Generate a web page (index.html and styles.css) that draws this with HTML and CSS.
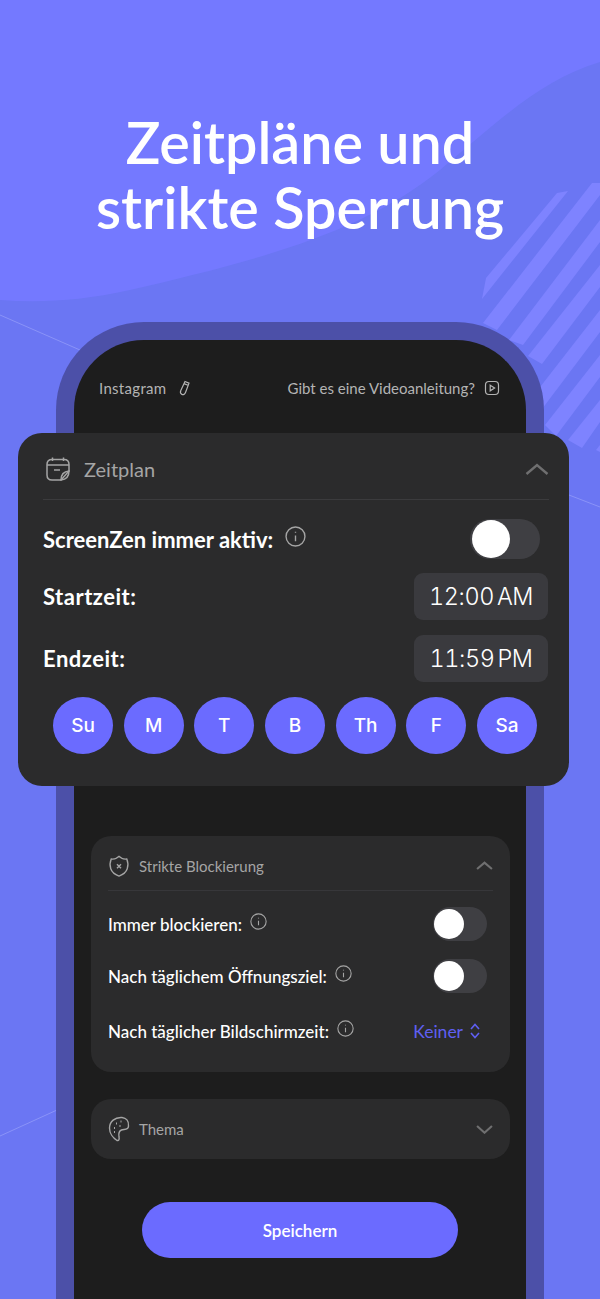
FILE: index.html
```html
<!DOCTYPE html>
<html lang="de">

<head>
    <meta charset="UTF-8">
    <meta name="viewport" content="width=device-width, initial-scale=1.0">
    <title>Zeitpläne und strikte Sperrung</title>
    <link rel="stylesheet" href="styles.css">
</head>

<body>
    <svg class="backdrop" viewBox="0 0 600 1299" aria-hidden="true">
        <rect width="600" height="1299" fill="#6b76f3" />
        <path class="blob" d="M0 0H600V62C540 80 500 120 440 170C360 235 250 262 130 290C80 301 40 303 0 300Z" />
        <g class="stripes">
            <path d="M557 193L568 191L482 299L486 278Z" />
            <path d="M483 323L592 183H600V195L497 330Z" />
            <path d="M509 340L600 220V242L523 345Z" />
            <path d="M528 356L600 265V287L542 364Z" />
            <path d="M530 400L600 310V332L530 425Z" />
            <path d="M545 425L600 355V377L556 436Z" />
            <path d="M568 440L600 400V422L582 448Z" />
            <path d="M600 445V452L596 450Z" />
        </g>
        <g class="hairlines">
            <path d="M0 315L80 350" />
            <path d="M569 495L600 507" />
            <path d="M0 1136L57 1110" />
        </g>
    </svg>

    <div class="page">
        <header class="hero">
            <h1>Zeitpläne und<br>strikte Sperrung</h1>
        </header>

        <div class="phone">
            <div class="screen">
                <div class="topbar">
                    <div class="topbar-item topbar-app">
                        <span>Instagram</span>
                        <svg class="icon-sm" viewBox="0 0 16 16">
                            <path d="M9 1.500L13 3.200L9.500 12.500C8.800 14.400 7.300 15 5.900 14.400C4.500 13.800 4 12.500 4.800 10.600Z" />
                            <path d="M8 3.600L12 5.300" />
                        </svg>
                    </div>
                    <div class="topbar-item">
                        <span>Gibt es eine Videoanleitung?</span>
                        <svg class="icon-sm" viewBox="0 0 16 16">
                            <rect x="1.500" y="1.500" width="13" height="13" rx="3.500" />
                            <path d="M6.200 5.200L10.600 8L6.200 10.800Z" />
                        </svg>
                    </div>
                </div>

                <section class="schedule">
                    <div class="schedule-head">
                        <svg class="icon-lg" viewBox="0 0 26 26">
                            <path d="M7.500 1.500V5M18.500 1.500V5" />
                            <path d="M24 15V8.500C24 5.500 22 3.500 19 3.500H7C4 3.500 2 5.500 2 8.500V19C2 22 4 24 7 24H16Z" />
                            <path d="M2 9H24" />
                            <path d="M9 14H15" />
                            <path d="M16 24C16 19 19 15.500 24 15C24 20 21 23.500 16 24Z" />
                        </svg>
                        <span class="head-title">Zeitplan</span>
                        <svg class="chevron" viewBox="0 0 24 12"><path d="M1.500 11L12 2L22.500 11" /></svg>
                    </div>

                    <div class="row row-first">
                        <div class="label">
                            <span>ScreenZen immer aktiv:</span>
                            <svg class="info info-lg" viewBox="0 0 20 20">
                                <circle cx="10" cy="10" r="9" />
                                <path d="M10 9V14.500M10 5.500V6.500" />
                            </svg>
                        </div>
                        <div class="toggle"><span class="knob"></span></div>
                    </div>
                    <div class="row row-time">
                        <span class="label label-time">Startzeit:</span>
                        <div class="time-chip">12:00 AM</div>
                    </div>
                    <div class="row row-time">
                        <span class="label label-time">Endzeit:</span>
                        <div class="time-chip">11:59 PM</div>
                    </div>

                    <div class="days">
                        <div class="day">Su</div>
                        <div class="day">M</div>
                        <div class="day">T</div>
                        <div class="day">B</div>
                        <div class="day">Th</div>
                        <div class="day">F</div>
                        <div class="day">Sa</div>
                    </div>
                </section>

                <section class="panel">
                    <div class="panel-head">
                        <svg class="icon-md" viewBox="0 0 24 24">
                            <path d="M12 1.500L15 3.500C16.500 4.500 18 4.600 20.500 4.400C22 8 22 12 21 15C19.800 18.600 16 21.500 12 23C8 21.500 4.200 18.600 3 15C2 12 2 8 3.500 4.400C6 4.600 7.500 4.500 9 3.500Z" />
                            <path d="M9.800 10L14.200 14.400M14.200 10L9.800 14.400" />
                        </svg>
                        <span class="panel-title">Strikte Blockierung</span>
                        <svg class="chevron chevron-sm" viewBox="0 0 24 12"><path d="M1.500 11L12 2L22.500 11" /></svg>
                    </div>
                    <div class="panel-body">
                        <div class="option">
                            <div class="option-label">
                                <span>Immer blockieren:</span>
                                <svg class="info" viewBox="0 0 20 20">
                                    <circle cx="10" cy="10" r="9" />
                                    <path d="M10 9V14.500M10 5.500V6.500" />
                                </svg>
                            </div>
                            <div class="toggle toggle-sm"><span class="knob"></span></div>
                        </div>
                        <div class="option">
                            <div class="option-label">
                                <span>Nach täglichem Öffnungsziel:</span>
                                <svg class="info" viewBox="0 0 20 20">
                                    <circle cx="10" cy="10" r="9" />
                                    <path d="M10 9V14.500M10 5.500V6.500" />
                                </svg>
                            </div>
                            <div class="toggle toggle-sm"><span class="knob"></span></div>
                        </div>
                        <div class="option option-last">
                            <div class="option-label">
                                <span>Nach täglicher Bildschirmzeit:</span>
                                <svg class="info" viewBox="0 0 20 20">
                                    <circle cx="10" cy="10" r="9" />
                                    <path d="M10 9V14.500M10 5.500V6.500" />
                                </svg>
                            </div>
                            <div class="picker">
                                <span>Keiner</span>
                                <svg class="updown" viewBox="0 0 10 16"><path d="M1 6L5 1.500L9 6M1 10L5 14.500L9 10" /></svg>
                            </div>
                        </div>
                    </div>
                </section>

                <section class="panel panel-closed">
                    <div class="panel-head">
                        <svg class="icon-palette" viewBox="0 0 22 26">
                            <path d="M14 1.500C7 1 1.500 5.500 1.500 12C1.500 17 5 22 9 24.500C11 25 11.500 23 11 21C10.500 18 11 15 13.500 14C16 13 20.500 14.500 20.500 10C21 5 18 2 14 1.500Z" />
                            <path class="dots" d="M6 12H7M8 7.500H9M12.500 5.500H13.500M11.500 10H12.500M6 16H7" />
                        </svg>
                        <span class="panel-title">Thema</span>
                        <svg class="chevron chevron-sm" viewBox="0 0 24 12"><path d="M1.500 1L12 10.500L22.500 1" /></svg>
                    </div>
                </section>

                <button class="save">Speichern</button>
            </div>
        </div>
    </div>
</body>

</html>
```

FILE: styles.css
```css
* {
    box-sizing: border-box;
}

html,
body {
    margin: 0;
    height: 1299px;
    overflow: hidden;
}

body {
    position: relative;
    font-family: "Lato", "Noto Sans", sans-serif;
    color: #fff;
    background-color: #6b76f3;
}

/* Hintergrund */
.backdrop {
    position: absolute;
    top: 0;
    left: 0;
    width: 600px;
    height: 1299px;
}

.blob {
    fill: #7479ff;
}

.stripes path {
    fill: #7e83ff;
}

.hairlines path {
    fill: none;
    stroke: #8a93f8;
    stroke-width: 1;
}

.page {
    position: relative;
}

.hero {
    height: 322px;
    padding-top: 109px;
    text-align: center;
}

.hero h1 {
    margin: 0;
    font-size: 57.500px;
    font-weight: 600;
    line-height: 65px;
}

/* Telefon */
.phone {
    width: 488px;
    height: 977px;
    margin-left: 56px;
    border: 18px solid #4c50a8;
    border-bottom: none;
    border-radius: 88px 88px 0 0;
    background-color: #1d1d1d;
}

.screen {
    display: flex;
    flex-direction: column;
}

.topbar {
    display: flex;
    align-items: center;
    justify-content: space-between;
    height: 93px;
    padding: 3px 26px 0 25px;
    color: #b4b4b4;
    font-size: 15px;
}

.topbar-item {
    display: flex;
    align-items: center;
    gap: 9px;
}

.topbar-app {
    gap: 10px;
    letter-spacing: 0.300px;
}

.icon-sm {
    width: 16px;
    height: 16px;
    fill: none;
    stroke: #b4b4b4;
    stroke-width: 1.200;
}

/* Zeitplan-Karte */
.schedule {
    margin: 0 -43px 0 -56px;
    padding: 0 21px 32px 25px;
    border-radius: 24px;
    background-color: #2b2b2c;
}

.schedule-head {
    display: flex;
    align-items: center;
    height: 67px;
    padding-top: 6px;
    border-bottom: 1px solid #3b3b3d;
    margin-right: -1px;
}

.icon-lg {
    width: 26px;
    height: 26px;
    margin-left: 2px;
    fill: none;
    stroke: #a5a5a5;
    stroke-width: 1.500;
}

.head-title {
    margin-left: 13px;
    font-size: 20px;
    color: #a5a5a5;
}

.chevron {
    width: 24px;
    height: 12px;
    margin-left: auto;
    fill: none;
    stroke: #6f6f70;
    stroke-width: 2.400;
}

.row {
    display: flex;
    align-items: center;
    justify-content: space-between;
}

.row-first {
    height: 40px;
    margin-top: 19px;
    padding-right: 8px;
}

.row-time {
    height: 47px;
    margin-top: 15px;
}

.row-first + .row-time {
    margin-top: 14px;
}

.label {
    display: flex;
    align-items: center;
    gap: 12px;
    font-size: 22px;
    font-weight: 700;
}

.label-time {
    letter-spacing: 0.500px;
}

.info {
    width: 17px;
    height: 17px;
    margin-top: -6px;
    fill: none;
    stroke: #a5a5a5;
    stroke-width: 1.300;
}

.info-lg {
    width: 21px;
    height: 21px;
    margin-top: -6px;
}

.toggle {
    display: flex;
    align-items: center;
    width: 70px;
    height: 40px;
    padding-left: 2px;
    border-radius: 20px;
    background-color: #3f3f43;
}

.knob {
    width: 38px;
    height: 38px;
    border-radius: 50%;
    background-color: #fff;
}

.time-chip {
    display: flex;
    align-items: center;
    justify-content: center;
    width: 134px;
    height: 47px;
    border-radius: 9px;
    background-color: #3a3a3e;
    font-family: "Inter", sans-serif;
    font-size: 23.500px;
    font-weight: 300;
    font-variant-numeric: tabular-nums;
    letter-spacing: -0.400px;
    word-spacing: -3px;
}

.days {
    display: flex;
    justify-content: space-between;
    margin: 15px 11px 0 10px;
}

.day {
    display: flex;
    align-items: center;
    justify-content: center;
    width: 60px;
    height: 57px;
    border-radius: 50%;
    background-color: #6b6bff;
    font-family: "Inter", sans-serif;
    font-size: 19px;
    font-weight: 500;
}

/* Untere Karten */
.panel {
    margin: 50px 16px 0 17px;
    padding: 0 17px;
    height: 236px;
    border-radius: 20px;
    background-color: #2b2b2c;
}

.panel-closed {
    height: 60px;
    margin-top: 27px;
}

.panel-head {
    display: flex;
    align-items: center;
    height: 55px;
    padding-top: 5px;
    border-bottom: 1px solid #37373a;
}

.panel-closed .panel-head {
    height: 60px;
    padding-top: 0;
    border-bottom: none;
}

.icon-md {
    width: 22px;
    height: 24px;
    fill: none;
    stroke: #a5a5a5;
    stroke-width: 1.500;
}

.icon-palette {
    width: 22px;
    height: 26px;
    fill: none;
    stroke: #a5a5a5;
    stroke-width: 1.400;
}

.dots {
    stroke-width: 2;
}

.panel-title {
    margin-left: 9px;
    font-size: 15px;
    color: #a5a5a5;
}

.chevron-sm {
    width: 17px;
    height: 9px;
    stroke-width: 3;
}

.panel-body {
    display: flex;
    flex-direction: column;
    gap: 18px;
    padding-top: 16px;
}

.option {
    display: flex;
    align-items: center;
    justify-content: space-between;
    height: 34px;
}

.option-last {
    margin-top: 3px;
}

.option-label {
    display: flex;
    align-items: center;
    gap: 8px;
    font-size: 17px;
    font-weight: 500;
}

.toggle-sm {
    width: 54px;
    height: 34px;
    margin-right: 6px;
    padding-left: 1px;
    border-radius: 17px;
}

.toggle-sm .knob {
    width: 30px;
    height: 30px;
}

.picker {
    display: flex;
    align-items: center;
    gap: 7px;
    margin-right: 13px;
    color: #5f5ff2;
    font-size: 17.500px;
}

.updown {
    width: 10px;
    height: 16px;
    fill: none;
    stroke: #5f5ff2;
    stroke-width: 1.600;
}

.save {
    align-self: center;
    width: 316px;
    height: 56px;
    margin-top: 43px;
    border: none;
    border-radius: 28px;
    background-color: #6b6bff;
    color: #fff;
    font-family: inherit;
    font-size: 17px;
    font-weight: 600;
}
```
